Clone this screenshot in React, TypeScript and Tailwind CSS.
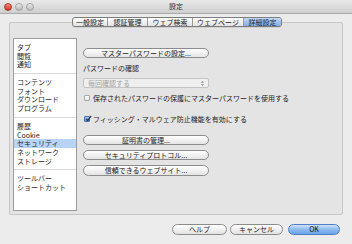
import React from 'react'

const TABS = [
  { label: '一般設定', w: 'w-[34px]' },
  { label: '認証管理', w: 'w-[40px]' },
  { label: 'ウェブ検索', w: 'w-[45px]' },
  { label: 'ウェブページ', w: 'w-[51px]' },
  { label: '詳細設定', w: 'w-[38px]', active: true },
]

const GROUPS = [
  ['タブ', '閲覧', '通知'],
  ['コンテンツ', 'フォント', 'ダウンロード', 'プログラム'],
  ['履歴', 'Cookie', 'セキュリティ', 'ネットワーク', 'ストレージ'],
  ['ツールバー', 'ショートカット'],
]

function PillButton({ label, className = '' }: { label: string; className?: string }) {
  return (
    <div
      className={`w-[126px] rounded-full border border-[#8c8c8c] bg-gradient-to-b from-white to-[#e4e4e4] flex items-center justify-center text-[7px] text-[#222] ${className}`}
    >
      {label}
    </div>
  )
}

export default function App() {
  return (
    <div
      className="w-[352px] h-[244px] bg-[#ececec] flex flex-col overflow-hidden text-[#1e1e1e]"
      style={{ fontFamily: '"Noto Sans CJK JP", "Noto Sans", sans-serif' }}
    >
      {/* title bar */}
      <div className="h-[14px] shrink-0 flex items-center px-[4px] gap-[3px] bg-gradient-to-b from-[#e9e9e9] to-[#cfcfcf] border-b border-[#a9a9a9] relative">
        <span className="w-[8px] h-[8px] rounded-full bg-gradient-to-b from-[#f4887c] to-[#d1281b] border border-[#a8392f]" />
        <span className="w-[8px] h-[8px] rounded-full bg-gradient-to-b from-[#ececec] to-[#b9b9b9] border border-[#a2a2a2]" />
        <span className="w-[8px] h-[8px] rounded-full bg-gradient-to-b from-[#ececec] to-[#b9b9b9] border border-[#a2a2a2]" />
        <span className="absolute inset-0 flex items-center justify-center text-[7px] text-[#333]">設定</span>
      </div>

      {/* tabs */}
      <div className="mt-[3px] flex justify-center relative z-10 pl-[2px]">
        <div className="flex h-[10px] rounded-[3px] border border-[#7c7c7c] overflow-hidden bg-gradient-to-b from-white to-[#e2e2e2] shadow-[0_1px_0_rgba(0,0,0,0.08)]">
          {TABS.map((t, i) => (
            <div
              key={t.label}
              className={`${t.w} flex items-center justify-center text-[7px] leading-none ${i > 0 ? 'border-l border-[#9a9a9a]' : ''} ${
                t.active ? 'bg-gradient-to-b from-[#c4dbf7] to-[#7fabe6] text-[#1a2a44]' : 'text-[#222]'
              }`}
            >
              {t.label}
            </div>
          ))}
        </div>
      </div>

      {/* panel */}
      <div className="mx-[9px] -mt-[5px] h-[193px] bg-[#e4e4e4] border border-[#c6c6c6] rounded-[2px] flex pl-[3px] pt-[15px] pb-[3px]">
        <div className="w-[64px] h-full bg-white border border-[#9c9c9c] text-[7px] leading-[8.7px]">
          {GROUPS.map((g, gi) => (
            <div key={gi} className={`py-[4px] ${gi < GROUPS.length - 1 ? 'border-b border-[#d9d9d9]' : ''}`}>
              {g.map((item) => (
                <div key={item} className={`pl-[3px] h-[8.7px] ${item === 'セキュリティ' ? 'bg-[#b7d3f6]' : ''}`}>
                  {item}
                </div>
              ))}
            </div>
          ))}
        </div>

        <div className="ml-[6px] flex flex-col text-[7px]">
          <PillButton label="マスターパスワードの設定..." className="mt-[10px] h-[10px]" />
          <div className="mt-[5px] leading-[10px] h-[10px]">パスワードの確認</div>
          <div className="mt-[5px] w-[126px] h-[10px] rounded-[2px] border border-[#c4c4c4] bg-[#efefef] flex items-center justify-between pl-[4px] pr-[3px] text-[#a2a2a2]">
            <span>毎回確認する</span>
            <svg viewBox="0 0 6 8" className="w-[5px] h-[7px]">
              <path d="M1 3 L3 1 L5 3 Z M1 5 L3 7 L5 5 Z" fill="#8f8f8f" />
            </svg>
          </div>
          <div className="mt-[5px] h-[10px] flex items-center gap-[3px] pl-[1px] whitespace-nowrap">
            <span className="w-[6px] h-[6px] border border-[#a8a8a8] bg-gradient-to-b from-white to-[#e6e6e6] rounded-[1px]" />
            <span>保存されたパスワードの保護にマスターパスワードを使用する</span>
          </div>
          <div className="mt-[11px] h-[10px] flex items-center gap-[3px] pl-[1px] whitespace-nowrap">
            <span className="w-[6px] h-[6px] border border-[#4a72b0] bg-gradient-to-b from-[#a9c8f0] to-[#5a8bd4] rounded-[1px] relative">
              <svg viewBox="0 0 8 8" className="absolute -top-[2px] left-0 w-[7px] h-[7px]">
                <path d="M1.5 4.5 L3.2 6.5 L7 1" fill="none" stroke="#1c2c48" strokeWidth="1.3" />
              </svg>
            </span>
            <span>フィッシング・マルウェア防止機能を有効にする</span>
          </div>
          <PillButton label="証明書の管理..." className="mt-[11px] h-[10px]" />
          <PillButton label="セキュリティプロトコル..." className="mt-[5px] h-[10px]" />
          <PillButton label="信頼できるウェブサイト..." className="mt-[5px] h-[11px]" />
        </div>
      </div>

      {/* bottom buttons */}
      <div className="mt-[9px] flex pl-[172px] gap-[3px] text-[7px]">
        <div className="w-[55px] h-[11px] rounded-full border border-[#8c8c8c] bg-gradient-to-b from-white to-[#e2e2e2] flex items-center justify-center">ヘルプ</div>
        <div className="w-[53px] h-[11px] rounded-full border border-[#8c8c8c] bg-gradient-to-b from-white to-[#e2e2e2] flex items-center justify-center">キャンセル</div>
        <div className="ml-[2px] w-[52px] h-[11px] rounded-full border border-[#4f7fc0] bg-gradient-to-b from-[#cfe3fb] via-[#8dbaf0] to-[#6aa4ea] flex items-center justify-center text-[#111]">OK</div>
      </div>
    </div>
  )
}
